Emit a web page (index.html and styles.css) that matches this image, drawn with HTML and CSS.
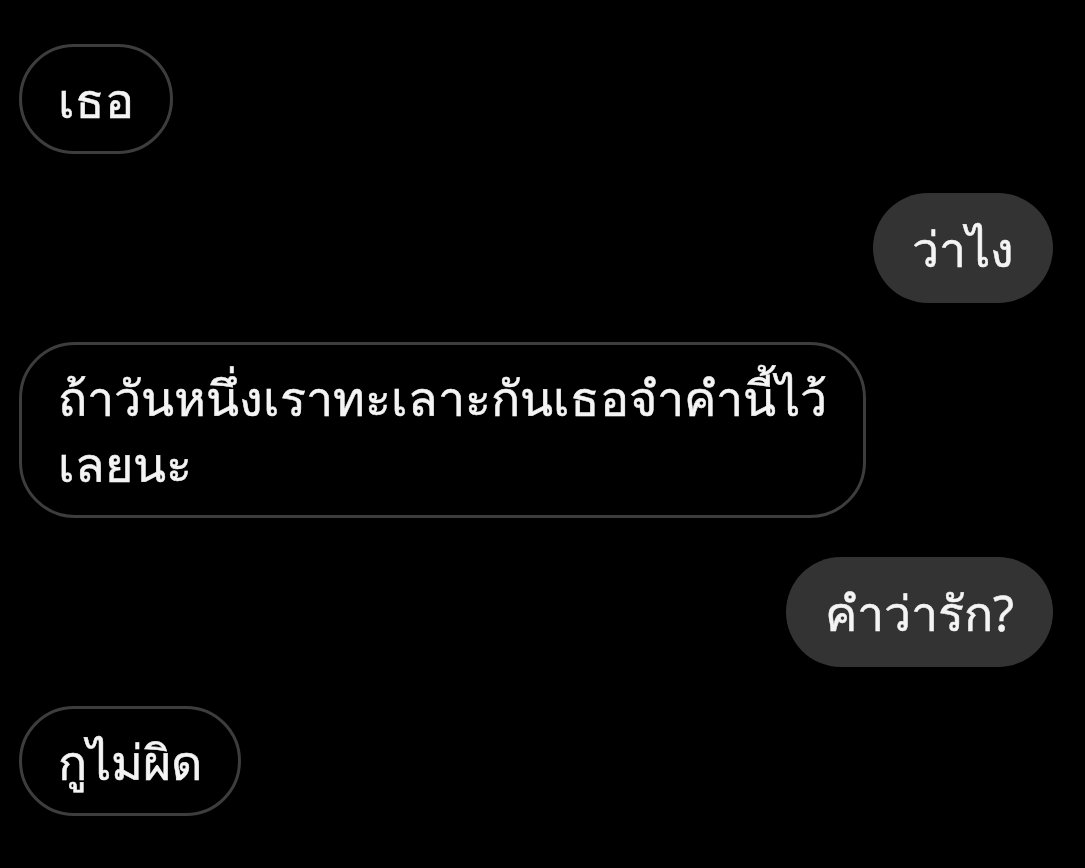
FILE: index.html
```html
<!DOCTYPE html>
<html lang="th">
<head>
<meta charset="utf-8">
<link rel="stylesheet" href="styles.css">
</head>
<body>
<div class="chat">
  <div class="msg in"><div class="bubble">เธอ</div></div>
  <div class="msg out"><div class="bubble">ว่าไง</div></div>
  <div class="msg in"><div class="bubble">ถ้าวันหนึ่งเราทะเลาะกันเธอจำคำนี้ไว้<br>เลยนะ</div></div>
  <div class="msg out"><div class="bubble">คำว่ารัก?</div></div>
  <div class="msg in"><div class="bubble">กูไม่ผิด</div></div>
</div>
</body>
</html>
```
FILE: styles.css
```css
html, body {
  margin: 0;
  padding: 0;
  background: #000;
}
body {
  width: 1085px;
  height: 868px;
  overflow: hidden;
  font-family: "Noto Looped Thai", "Noto Sans Thai Looped UI", "Noto Sans", sans-serif;
  color: #f4f4f4;
}
.chat {
  display: flex;
  flex-direction: column;
  gap: 39px;
  padding: 44px 32px 0 19px;
}
.msg {
  display: flex;
}
.msg.in {
  justify-content: flex-start;
}
.msg.out {
  justify-content: flex-end;
}
.bubble {
  font-size: 48.4px;
  line-height: 66px;
  padding: 22px 39px;
  border-radius: 56px;
  white-space: nowrap;
  -webkit-text-stroke: 0.5px #f4f4f4;
}
.in .bubble {
  border: 3px solid #3d3d3d;
  padding: 19px 36px;
}
.out .bubble {
  background: #333333;
}
```
